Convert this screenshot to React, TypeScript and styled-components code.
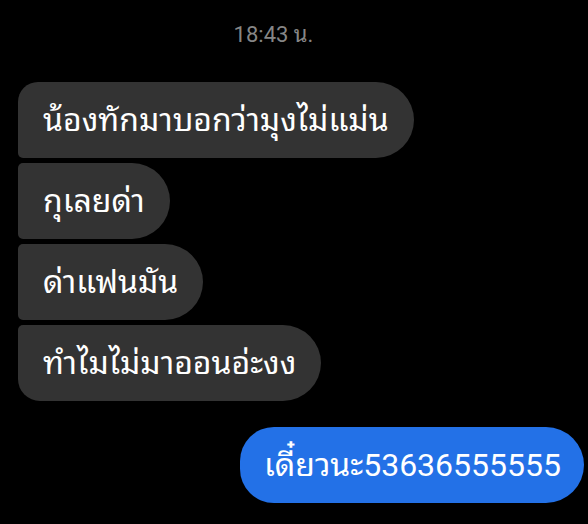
import React from "react";
import styled, { createGlobalStyle } from "styled-components";

const Global = createGlobalStyle`
  html, body { margin: 0; padding: 0; background: #000; }
  body { font-family: Roboto, "Noto Sans Thai Looped", "Loma", "Garuda", "Noto Sans Thai", "Noto Sans", sans-serif; }
`;

const Screen = styled.div`
  width: 588px;
  height: 524px;
  background: #000;
  display: flex;
  flex-direction: column;
  overflow: hidden;
`;

const Stamp = styled.div`
  margin-top: 22px;
  margin-right: 41px;
  text-align: center;
  color: #868686;
  font-size: 22px;
  line-height: 26px;
`;

const Group = styled.div`
  margin-top: 34px;
  padding-left: 18px;
  display: flex;
  flex-direction: column;
  align-items: flex-start;
  gap: 5px;
`;

type Pos = "first" | "middle" | "last";

const Received = styled.div<{ $pos: Pos }>`
  background: #333333;
  color: #fff;
  font-size: 32px;
  line-height: 40px;
  height: 76px;
  box-sizing: border-box;
  padding: 18px 25px;
  border-radius: ${(p) =>
    p.$pos === "first"
      ? "20px 38px 38px 5px"
      : p.$pos === "last"
      ? "5px 38px 38px 22px"
      : "5px 38px 38px 5px"};
  white-space: nowrap;
`;

const SentRow = styled.div`
  margin-top: 26px;
  padding-right: 4px;
  display: flex;
  justify-content: flex-end;
`;

const Sent = styled.div`
  background: #2371e7;
  color: #fff;
  font-size: 32px;
  line-height: 40px;
  height: 76px;
  box-sizing: border-box;
  padding: 18px 23px 18px 24px;
  border-radius: 34px 38px 38px 34px;
  white-space: nowrap;
`;

const msgs = [
  "น้องทักมาบอกว่ามุงไม่แม่น",
  "กุเลยด่า",
  "ด่าแฟนมัน",
  "ทำไมไม่มาออนอ่ะงง",
];

export default function App() {
  return (
    <Screen>
      <Global />
      <Stamp>18:43 น.</Stamp>
      <Group>
        {msgs.map((m, i) => (
          <Received key={i} $pos={i === 0 ? "first" : i === msgs.length - 1 ? "last" : "middle"}>
            {m}
          </Received>
        ))}
      </Group>
      <SentRow>
        <Sent>เดี๋ยวนะ53636555555</Sent>
      </SentRow>
    </Screen>
  );
}
